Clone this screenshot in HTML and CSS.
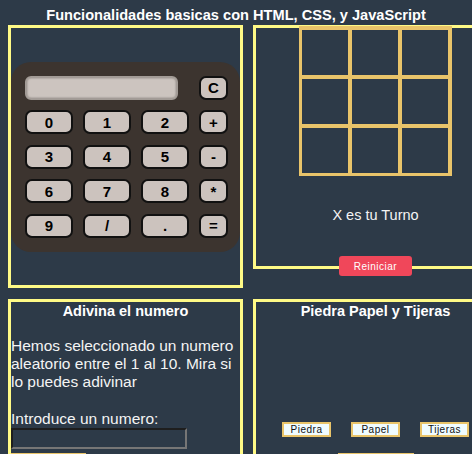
FILE: index.html
```html
<!DOCTYPE html>
<html lang="es">
<head>
<meta charset="utf-8">
<title>Funcionalidades basicas</title>
<link rel="stylesheet" href="styles.css">
</head>
<body>
<h1 class="page-title">Funcionalidades basicas con HTML, CSS, y JavaScript</h1>
<main class="board">
  <section class="panel panel-calc">
    <div class="calc">
      <input class="calc-display" type="text" readonly>
      <button class="key">C</button>
      <button class="key">0</button>
      <button class="key">1</button>
      <button class="key">2</button>
      <button class="key">+</button>
      <button class="key">3</button>
      <button class="key">4</button>
      <button class="key">5</button>
      <button class="key">-</button>
      <button class="key">6</button>
      <button class="key">7</button>
      <button class="key">8</button>
      <button class="key">*</button>
      <button class="key">9</button>
      <button class="key">/</button>
      <button class="key">.</button>
      <button class="key">=</button>
    </div>
  </section>

  <section class="panel panel-ttt">
    <div class="ttt-grid">
      <div class="cell"></div><div class="cell"></div><div class="cell"></div>
      <div class="cell"></div><div class="cell"></div><div class="cell"></div>
      <div class="cell"></div><div class="cell"></div><div class="cell"></div>
    </div>
    <p class="turn">X es tu Turno</p>
    <button class="reset">Reiniciar</button>
  </section>

  <section class="panel panel-guess">
    <h2 class="panel-title">Adivina el numero</h2>
    <p class="guess-text">Hemos seleccionado un numero aleatorio entre el 1 al 10. Mira si lo puedes adivinar</p>
    <label class="guess-label" for="guess">Introduce un numero:</label>
    <input class="guess-input" id="guess" type="text">
    <button class="gold-btn guess-btn" aria-label="Comprobar"></button>
  </section>

  <section class="panel panel-rps">
    <h2 class="panel-title">Piedra Papel y Tijeras</h2>
    <div class="rps-choices">
      <button class="rps-btn">Piedra</button>
      <button class="rps-btn">Papel</button>
      <button class="rps-btn">Tijeras</button>
    </div>
    <button class="gold-btn rps-play" aria-label="Jugar"></button>
  </section>
</main>
</body>
</html>
```

FILE: styles.css
```css
html, body {
  margin: 0;
  overflow: hidden;
  background: #2d3a48;
}

body {
  padding: 7px 8px 0;
  font-family: "Liberation Sans", Arial, sans-serif;
  color: #ffffff;
}

.page-title {
  margin: 0 0 2px;
  width: 456px;
  font-size: 14.6px;
  line-height: 16px;
  font-weight: bold;
  text-align: center;
}

.board {
  display: grid;
  grid-template-columns: 235px 245px;
  grid-template-rows: 263px 220px;
  column-gap: 10px;
  row-gap: 11px;
  align-items: start;
  width: 490px;
}

.panel {
  box-sizing: border-box;
  border: 3px solid #fffa86;
}

/* Calculator */
.panel-calc {
  height: 263px;
  display: flex;
  align-items: center;
}

.calc {
  box-sizing: border-box;
  width: 229px;
  height: 190px;
  padding: 14px 12px 14px 14px;
  background: #3c342f;
  border-radius: 20px;
  display: grid;
  grid-template-columns: 48px 48px 48px 29px;
  grid-auto-rows: 24px;
  column-gap: 10px;
  row-gap: 10.5px;
}

.calc-display {
  grid-column: 1 / span 3;
  box-sizing: border-box;
  width: 153px;
  height: 24px;
  margin: 0;
  padding: 0 6px;
  border: 2px solid #a29b96;
  border-radius: 6px;
  background: #ccc4bf;
  box-shadow: inset 0 0 2px #7a746f;
}

.key {
  box-sizing: border-box;
  margin: 0;
  padding: 0;
  height: 24px;
  border: 2px solid #111111;
  border-bottom-width: 2.5px;
  border-radius: 7px;
  background: #ccc3be;
  color: #000000;
  font-family: "Liberation Sans", Arial, sans-serif;
  font-size: 15px;
  font-weight: bold;
}

/* Tic tac toe */
.panel-ttt {
  height: 244px;
  display: flex;
  flex-direction: column;
  align-items: center;
}

.ttt-grid {
  margin-top: -2px;
  display: grid;
  grid-template-columns: repeat(3, 46px);
  grid-template-rows: repeat(3, 45px);
  gap: 4px;
  padding: 4px 4px 3px 3px;
  background: #e9c46a;
}

.cell {
  background: #2d3a48;
}

.turn {
  margin: 31px 0 0;
  font-size: 14.5px;
  line-height: 17px;
  color: #f4f4f4;
}

.reset {
  margin: auto 0 -10px;
  width: 73px;
  height: 20px;
  padding: 0;
  border: none;
  border-radius: 3px;
  background: #f0475a;
  color: #ffffff;
  font-family: "Liberation Sans", Arial, sans-serif;
  font-size: 10px;
  letter-spacing: 0.5px;
}

/* Guess number */
.panel-guess {
  height: 220px;
}

.panel-title {
  margin: 1px 0 0;
  font-size: 14.5px;
  line-height: 16px;
  font-weight: bold;
  text-align: center;
}

.guess-text {
  margin: 18px 0 0;
  font-size: 15.5px;
  line-height: 18px;
  color: #f4f4f4;
}

.guess-label {
  display: block;
  margin-top: 18px;
  font-size: 15.5px;
  line-height: 19px;
  color: #f4f4f4;
}

.guess-input {
  display: block;
  box-sizing: border-box;
  width: 176px;
  height: 21px;
  margin: 0;
  border: 2px solid;
  border-color: #1e1e1e #767676 #767676 #1e1e1e;
  background: transparent;
}

.gold-btn {
  display: block;
  height: 20px;
  padding: 0;
  border: none;
  background: #e9c46a;
}

.guess-btn {
  margin-top: 4px;
  width: 75px;
}

/* Rock paper scissors */
.panel-rps {
  height: 220px;
  display: flex;
  flex-direction: column;
  align-items: center;
}

.panel-rps .panel-title {
  width: 100%;
}

.rps-choices {
  margin-top: 103px;
  display: flex;
  gap: 20px;
}

.rps-btn {
  box-sizing: border-box;
  width: 49px;
  height: 15px;
  padding: 0;
  border: 2px solid #e9c46a;
  background: #f0fcff;
  color: #111111;
  font-family: "Liberation Sans", Arial, sans-serif;
  font-size: 10px;
  letter-spacing: 0.5px;
  line-height: 11px;
}

.rps-play {
  margin-top: 16px;
  width: 76px;
}
```
